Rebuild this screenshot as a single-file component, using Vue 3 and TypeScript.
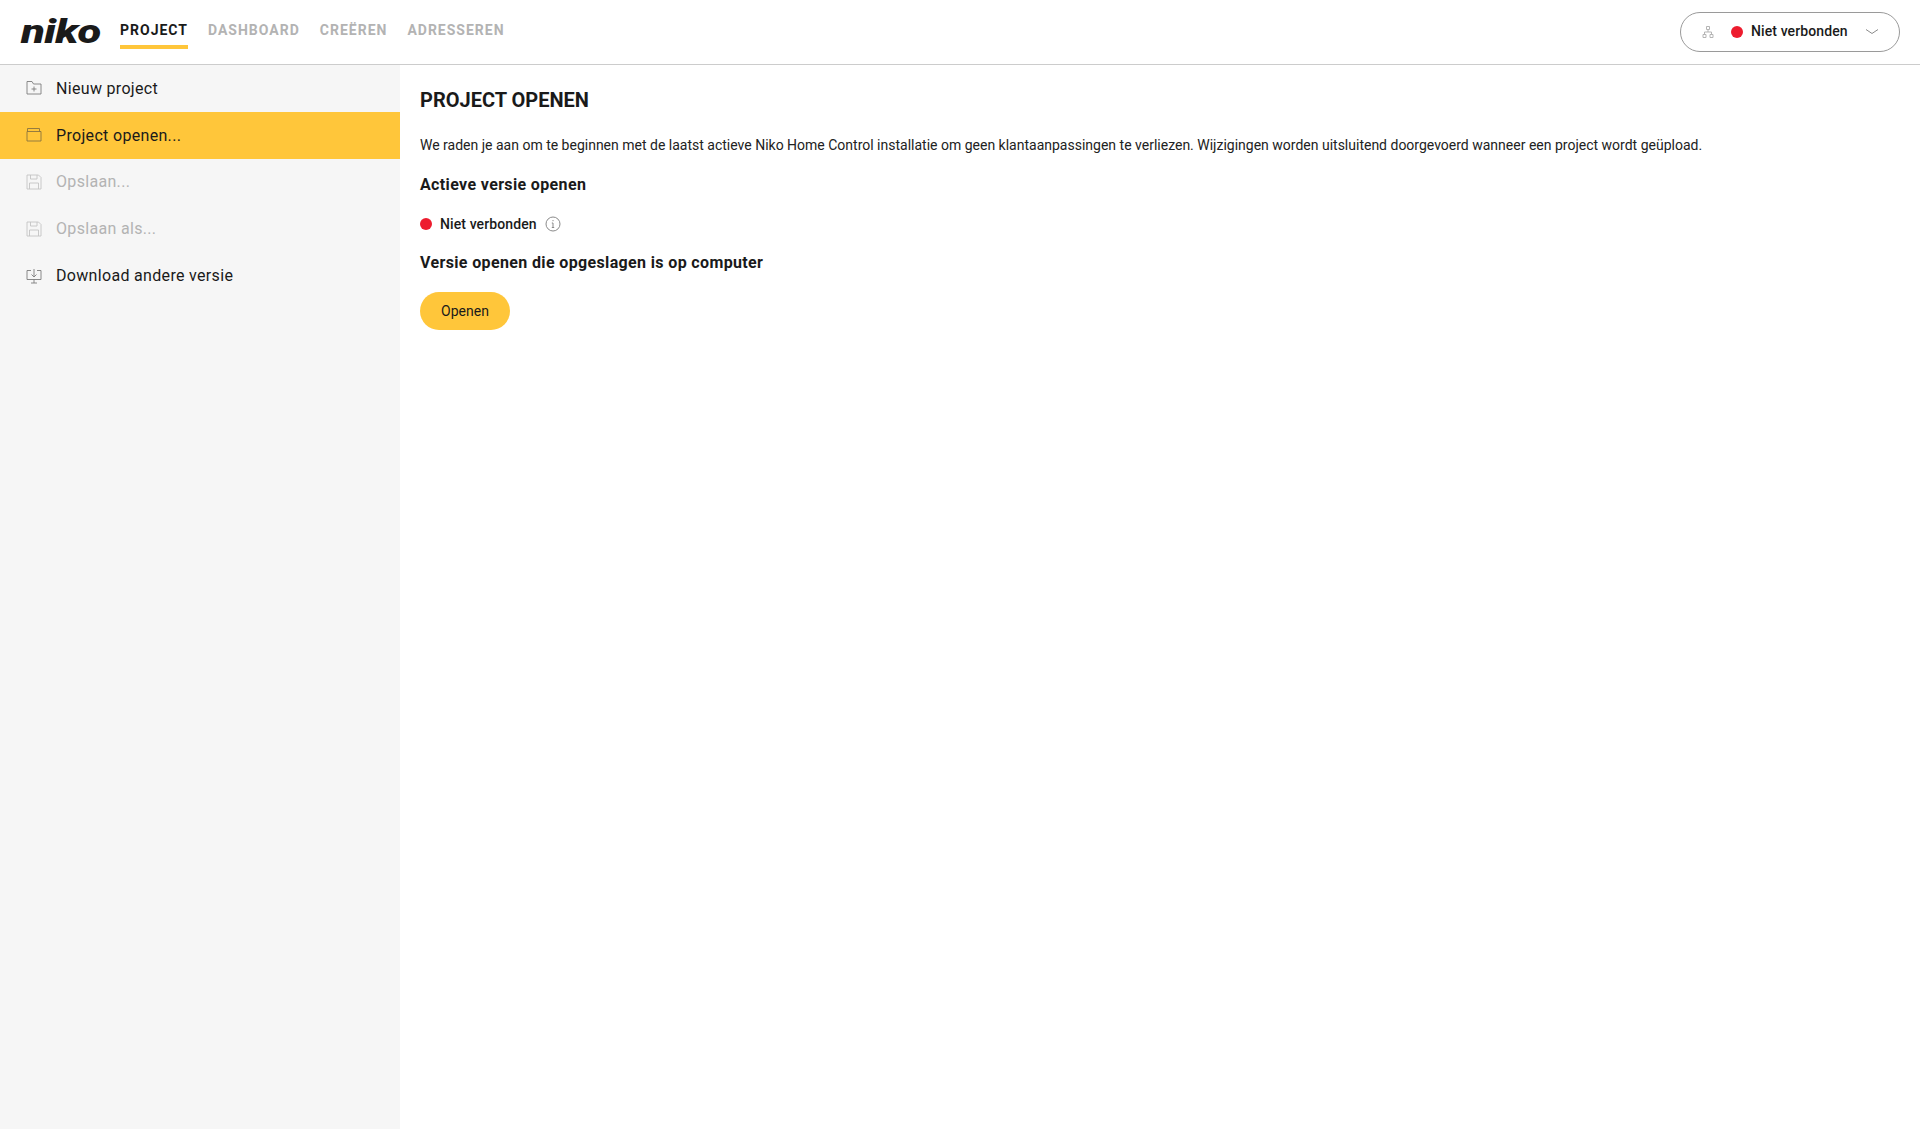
<template>
  <div class="app">
    <header class="topbar">
      <div class="logo-box"><span class="logo">niko</span></div>
      <nav class="nav">
        <a
          v-for="tab in tabs"
          :key="tab"
          class="tab"
          :class="{ active: tab === 'PROJECT' }"
        >{{ tab }}</a>
      </nav>
      <div class="status-pill">
        <svg class="net-icon" width="14" height="14" viewBox="0 0 14 14" fill="none" stroke="#b5b5b5">
          <path d="M5.500 1.500h3v3h-3zM2 9.500h3v3H2zM9 9.500h3v3H9zM7 4.500V7M3.500 9.500V7h7v2.500" />
        </svg>
        <span class="dot"></span>
        <span class="status-text">Niet verbonden</span>
        <svg class="chevron" width="14" height="8" viewBox="0 0 14 8" fill="none" stroke="#8c8c8c">
          <path d="M1 1.500 7 5.500l6-4" />
        </svg>
      </div>
    </header>

    <div class="body">
      <aside class="sidebar">
        <div
          v-for="item in menu"
          :key="item.label"
          class="menu-item"
          :class="{ selected: item.selected, disabled: item.disabled }"
        >
          <svg class="menu-icon" width="16" height="16" viewBox="0 0 16 16" fill="none" :stroke="item.stroke" stroke-width="0.9">
            <path :d="item.icon" />
          </svg>
          <span>{{ item.label }}</span>
        </div>
      </aside>

      <main class="content">
        <h1>PROJECT OPENEN</h1>
        <p class="intro">
          We raden je aan om te beginnen met de laatst actieve Niko Home Control installatie om geen klantaanpassingen te verliezen. Wijzigingen worden uitsluitend doorgevoerd wanneer een project wordt geüpload.
        </p>
        <h2>Actieve versie openen</h2>
        <div class="connection">
          <span class="dot"></span>
          <span class="status-text">Niet verbonden</span>
          <svg class="info" width="16" height="16" viewBox="0 0 16 16" fill="none" stroke="#8a8a8a">
            <circle cx="8" cy="8" r="7" />
            <path d="M8 7v4.500M6.800 7H8M6.800 11.500h2.400M8 4v1.200" />
          </svg>
        </div>
        <h2>Versie openen die opgeslagen is op computer</h2>
        <button class="open-btn">Openen</button>
      </main>
    </div>
  </div>
</template>

<script setup lang="ts">
interface MenuItem {
  label: string
  icon: string
  stroke: string
  selected?: boolean
  disabled?: boolean
}

const tabs = ['PROJECT', 'DASHBOARD', 'CREËREN', 'ADRESSEREN']

const folderPlus = 'M1 14V1.500h5l1.500 2.500H15V14zM8 6.500v5M5.500 9h5'
const folderOpen = 'M1.500 4.500V1.500h12v3M1 14V4.500h14V14z'
const floppy = 'M1 1h11.500L15 3.500V15H1zM4.500 1v4h6.500V1M3.500 15V9h9v6'
const download = 'M5 2.500H1V11.500h14V2.500h-4M8 1v7.500M5.500 6.500 8 9l2.500-2.500M8 11.500V15M5 15h6'

const menu: MenuItem[] = [
  { label: 'Nieuw project', icon: folderPlus, stroke: '#7d7d7d' },
  { label: 'Project openen...', icon: folderOpen, stroke: '#8a7440', selected: true },
  { label: 'Opslaan...', icon: floppy, stroke: '#c4c4c4', disabled: true },
  { label: 'Opslaan als...', icon: floppy, stroke: '#c4c4c4', disabled: true },
  { label: 'Download andere versie', icon: download, stroke: '#7d7d7d' },
]
</script>

<style>
html,
body {
  margin: 0;
  background: #fff;
}
</style>

<style scoped>
.app {
  height: 1129px;
  display: flex;
  flex-direction: column;
  font-family: Roboto, "Liberation Sans", sans-serif;
  color: #1a1a1a;
  overflow: hidden;
}

.topbar {
  height: 64px;
  flex: none;
  display: flex;
  align-items: center;
  padding: 0 20px;
  border-bottom: 1px solid #cccccc;
}

.logo-box {
  width: 100px;
  flex: none;
}

.logo {
  display: inline-block;
  font-size: 34px;
  line-height: 34px;
  font-weight: 900;
  font-style: italic;
  color: #1a1a1a;
  letter-spacing: -0.5px;
  transform: translateX(1px) scaleX(1.28);
  transform-origin: left center;
  margin-top: -2px;
}

.nav {
  display: flex;
  gap: 20px;
  align-self: stretch;
}

.tab {
  height: 49px;
  box-sizing: border-box;
  padding-top: 21px;
  font-size: 14px;
  line-height: 18px;
  font-weight: 700;
  letter-spacing: 1px;
  color: #b3b3b3;
  border-bottom: 4px solid transparent;
}

.tab.active {
  color: #1a1a1a;
  border-bottom-color: #ffc63a;
}

.status-pill {
  margin-left: auto;
  width: 220px;
  height: 40px;
  box-sizing: border-box;
  display: flex;
  align-items: center;
  padding: 0 20px;
  border: 1px solid #9a9a9a;
  border-radius: 20px;
}

.status-pill .status-text {
  margin-top: -2px;
}

.net-icon {
  margin-right: 16px;
}

.dot {
  width: 12px;
  height: 12px;
  flex: none;
  border-radius: 50%;
  background: #ed1c2e;
}

.status-text {
  margin-left: 8px;
  font-size: 14px;
  line-height: 18px;
  font-weight: 500;
  letter-spacing: 0.1px;
  color: #1a1a1a;
}

.chevron {
  margin-left: auto;
}

.body {
  flex: 1;
  display: flex;
  min-height: 0;
}

.sidebar {
  width: 400px;
  flex: none;
  background: #f6f6f6;
}

.menu-item {
  height: 46.8px;
  display: flex;
  align-items: center;
  gap: 14px;
  padding-left: 26px;
  font-size: 16px;
  letter-spacing: 0.32px;
  color: #1a1a1a;
}

.menu-item.selected {
  background: #ffc63a;
}

.menu-item.disabled {
  color: #b3b3b3;
}

.content {
  flex: 1;
  padding: 23px 20px;
}

h1 {
  margin: 0;
  font-size: 20px;
  line-height: 24px;
  font-weight: 700;
  color: #1a1a1a;
}

.intro {
  margin: 23px 0 0;
  font-size: 14px;
  line-height: 20px;
  color: #222;
}

h2 {
  margin: 0;
  font-size: 16px;
  line-height: 20px;
  font-weight: 700;
  letter-spacing: 0.36px;
  color: #1a1a1a;
}

.intro + h2 {
  margin-top: 20px;
}

.connection {
  display: flex;
  align-items: center;
  margin-top: 19px;
  height: 20px;
}

.info {
  margin-left: 8px;
}

.connection + h2 {
  margin-top: 19px;
}

.open-btn {
  display: block;
  margin-top: 19px;
  width: 90px;
  height: 38px;
  padding: 0 0 1px;
  border: none;
  border-radius: 19px;
  background: #ffc63a;
  font-family: inherit;
  font-size: 14px;
  color: #1a1a1a;
}
</style>
